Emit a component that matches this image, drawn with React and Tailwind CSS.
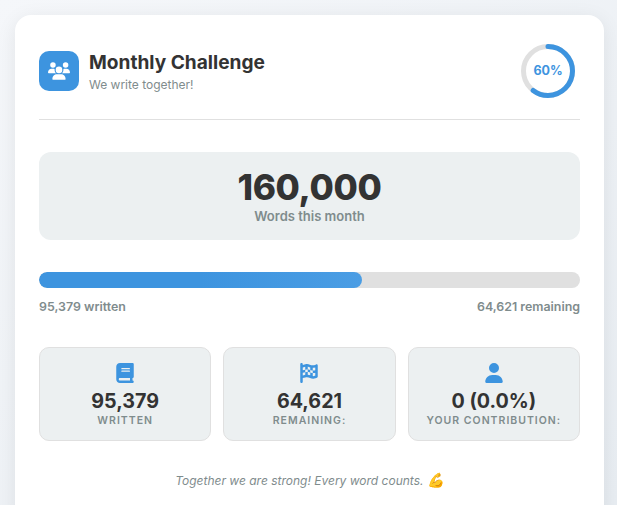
import React from 'react';
import { FaUsers, FaBook, FaFlagCheckered, FaUser } from 'react-icons/fa6';

const stats = [
    { icon: FaBook, value: '95,379', label: 'Written' },
    { icon: FaFlagCheckered, value: '64,621', label: 'Remaining:' },
    { icon: FaUser, value: '0 (0.0%)', label: 'Your contribution:' },
];

const ProgressRing = ({ percent }) => {
    const radius = 24.5;
    const circumference = 2 * Math.PI * radius;
    return (
        <div className="relative w-[54px] h-[54px]">
            <svg width="54" height="54" viewBox="0 0 54 54" className="-rotate-90">
                <circle cx="27" cy="27" r={radius} fill="none" stroke="#e0e0e0" strokeWidth="5" />
                <circle
                    cx="27"
                    cy="27"
                    r={radius}
                    fill="none"
                    stroke="#3d94df"
                    strokeWidth="5"
                    strokeLinecap="round"
                    strokeDasharray={circumference}
                    strokeDashoffset={circumference * (1 - percent / 100)}
                />
            </svg>
            <div className="absolute inset-0 flex items-center justify-center text-[12.5px] font-bold text-[#3d94df]">
                {percent}%
            </div>
        </div>
    );
};

export default function App() {
    return (
        <div className="h-[505px] overflow-hidden bg-gradient-to-br from-[#f5f7fa] to-[#e8edf2] pl-[15px] pr-[13px] pt-[15px] font-['Inter',sans-serif]">
            <div className="bg-white rounded-[16px] shadow-[0_4px_20px_rgba(0,0,0,0.08)] px-6 pt-[29px] pb-10">
                <div className="flex items-center justify-between pb-[21px] border-b border-[#e0e0e0]">
                    <div className="flex items-center gap-[10px]">
                        <div className="w-10 h-10 rounded-[10px] bg-[#3d94df] flex items-center justify-center text-white">
                            <FaUsers className="w-[22px] h-[22px]" />
                        </div>
                        <div className="pt-[2px]">
                            <div className="text-[19.1px] leading-[23px] font-bold text-[#333333]">Monthly Challenge</div>
                            <div className="mt-[3px] text-[12px] leading-[16px] text-[#7f8c8d]">We write together!</div>
                        </div>
                    </div>
                    <div className="mr-[5px]">
                        <ProgressRing percent={60} />
                    </div>
                </div>

                <div className="mt-8 h-[88px] rounded-[12px] bg-[#ecf0f1] flex flex-col items-center justify-center">
                    <div className="-mt-[1px] text-[35.2px] leading-[40px] font-extrabold tracking-[-0.01em] text-[#333333]">160,000</div>
                    <div className="mt-[1px] text-[13px] leading-[16px] font-semibold text-[#7f8c8d]">Words this month</div>
                </div>

                <div className="mt-8 h-4 rounded-full bg-[#e0e0e0] overflow-hidden">
                    <div className="h-full rounded-full bg-gradient-to-r from-[#3d94df] via-[#3d94df] to-[#4a9de4]" style={{ width: '59.7%' }} />
                </div>
                <div className="mt-[11px] flex justify-between text-[12.4px] leading-[16px] font-semibold text-[#7f8c8d]">
                    <span>95,379 written</span>
                    <span>64,621 remaining</span>
                </div>

                <div className="mt-8 grid grid-cols-3 gap-3">
                    {stats.map((stat) => {
                        const Icon = stat.icon;
                        return (
                            <div key={stat.label} className="h-[94px] rounded-[10px] bg-[#ecf0f1] border border-[#e0e0e0] flex flex-col items-center pt-[15px]">
                                <Icon className="w-5 h-5 text-[#3d94df]" />
                                <div className="mt-[6px] text-[19.7px] leading-[24px] font-bold text-[#333333]">{stat.value}</div>
                                <div className="mt-[1px] text-[10.5px] leading-[14px] font-semibold uppercase tracking-[0.095em] text-[#7f8c8d]">{stat.label}</div>
                            </div>
                        );
                    })}
                </div>

                <div className="mt-[31px] text-center text-[12px] leading-[16px] italic text-[#7f8c8d]">
                    Together we are strong! Every word counts. <span className="text-[14px]">💪</span>
                </div>
            </div>
        </div>
    );
}
